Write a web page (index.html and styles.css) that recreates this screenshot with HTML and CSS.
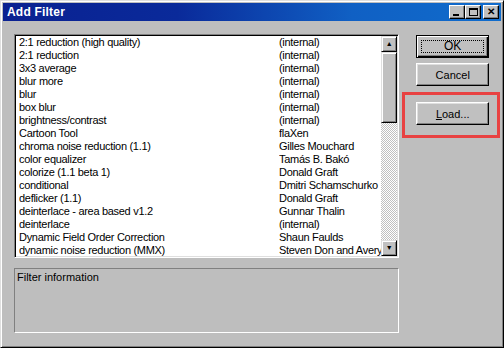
FILE: index.html
```html
<!DOCTYPE html>
<html lang="en">
<head>
    <meta charset="UTF-8">
    <title>Add Filter</title>
    <link rel="stylesheet" href="styles.css">
</head>
<body>
    <div class="window">
        <div class="titlebar">
            <span class="title">Add Filter</span>
            <div class="title-buttons">
                <div class="tbtn"><span class="glyph-min"></span></div>
                <div class="tbtn"><span class="glyph-max"></span></div>
                <div class="tbtn close">&#x2715;</div>
            </div>
        </div>

        <div class="client">
            <div class="left-col">
                <div class="listbox">
                    <div class="rows">
                        <div class="row"><span>2:1 reduction (high quality)</span><span>(internal)</span></div>
                        <div class="row"><span>2:1 reduction</span><span>(internal)</span></div>
                        <div class="row"><span>3x3 average</span><span>(internal)</span></div>
                        <div class="row"><span>blur more</span><span>(internal)</span></div>
                        <div class="row"><span>blur</span><span>(internal)</span></div>
                        <div class="row"><span>box blur</span><span>(internal)</span></div>
                        <div class="row"><span>brightness/contrast</span><span>(internal)</span></div>
                        <div class="row"><span>Cartoon Tool</span><span>flaXen</span></div>
                        <div class="row"><span>chroma noise reduction (1.1)</span><span>Gilles Mouchard</span></div>
                        <div class="row"><span>color equalizer</span><span>Tamás B. Bakó</span></div>
                        <div class="row"><span>colorize (1.1 beta 1)</span><span>Donald Graft</span></div>
                        <div class="row"><span>conditional</span><span>Dmitri Schamschurko</span></div>
                        <div class="row"><span>deflicker (1.1)</span><span>Donald Graft</span></div>
                        <div class="row"><span>deinterlace - area based v1.2</span><span>Gunnar Thalin</span></div>
                        <div class="row"><span>deinterlace</span><span>(internal)</span></div>
                        <div class="row"><span>Dynamic Field Order Correction</span><span>Shaun Faulds</span></div>
                        <div class="row"><span>dynamic noise reduction (MMX)</span><span>Steven Don and Avery Lee</span></div>
                    </div>
                    <div class="scrollbar">
                        <div class="sbtn">&#x25B2;</div>
                        <div class="thumb"></div>
                        <div class="track"></div>
                        <div class="sbtn">&#x25BC;</div>
                    </div>
                </div>
                <div class="info">Filter information</div>
            </div>

            <div class="right-col">
                <button class="btn default"><span class="focus">OK</span></button>
                <button class="btn">Cancel</button>
                <div class="highlight">
                    <button class="btn"><u>L</u>oad...</button>
                </div>
            </div>
        </div>
    </div>
</body>
</html>
```

FILE: styles.css
```css
body {
    margin: 0;
    font-family: 'Liberation Sans', Arial, sans-serif;
    font-size: 11px;
    color: #000;
    background: #c0c0c0;
}
.window {
    width: 504px;
    height: 348px;
    box-sizing: border-box;
    padding: 3px;
    background: #bebebe;
    border-top: 1px solid #dfdfdf;
    border-left: 1px solid #dfdfdf;
    border-right: 1px solid #000;
    border-bottom: 1px solid #000;
    box-shadow: inset 1px 1px 0 #fff, inset -1px -1px 0 #808080;
}
.titlebar {
    height: 18px;
    margin: -1px -1px 0 -1px;
    display: flex;
    align-items: center;
    justify-content: space-between;
    padding: 0 2px 0 4px;
    background: linear-gradient(to right, #0a2191 0%, #0a2a9a 35%, #1060c4 70%, #106ccc 100%);
}
.title {
    color: #fff;
    font-weight: bold;
    font-size: 12px;
    letter-spacing: 0.2px;
}
.title-buttons {
    display: flex;
}
.tbtn {
    width: 16px;
    height: 14px;
    box-sizing: border-box;
    background: #c0c0c0;
    border-top: 1px solid #fff;
    border-left: 1px solid #fff;
    border-right: 1px solid #000;
    border-bottom: 1px solid #000;
    box-shadow: inset -1px -1px 0 #808080;
    display: flex;
    align-items: center;
    justify-content: center;
}
.tbtn.close {
    margin-left: 2px;
    font-size: 10px;
    font-weight: bold;
    line-height: 1;
}
.glyph-min {
    width: 6px;
    height: 2px;
    background: #000;
    margin-top: 6px;
    margin-right: 2px;
}
.glyph-max {
    width: 9px;
    height: 8px;
    box-sizing: border-box;
    border: 1px solid #000;
    border-top-width: 2px;
}
.client {
    display: flex;
    padding: 13px 0 0 10px;
}
.left-col {
    width: 386px;
    display: flex;
    flex-direction: column;
    gap: 10px;
}
.listbox {
    height: 224px;
    box-sizing: border-box;
    display: flex;
    background: #fff;
    border-top: 1px solid #808080;
    border-left: 1px solid #808080;
    border-right: 1px solid #fff;
    border-bottom: 1px solid #fff;
    box-shadow: inset 1px 1px 0 #000, inset -1px -1px 0 #dfdfdf;
    padding: 1px;
    overflow: hidden;
}
.rows {
    flex: 1;
    min-width: 0;
    overflow: hidden;
}
.row {
    height: 13px;
    line-height: 13px;
    display: grid;
    grid-template-columns: 260px 1fr;
    padding-left: 3px;
    letter-spacing: -0.3px;
    white-space: nowrap;
    overflow: hidden;
}
.row span {
    overflow: hidden;
}
.scrollbar {
    width: 16px;
    flex-shrink: 0;
    display: flex;
    flex-direction: column;
}
.sbtn, .thumb {
    box-sizing: border-box;
    background: #c0c0c0;
    border-top: 1px solid #dfdfdf;
    border-left: 1px solid #dfdfdf;
    border-right: 1px solid #000;
    border-bottom: 1px solid #000;
    box-shadow: inset 1px 1px 0 #fff, inset -1px -1px 0 #808080;
}
.sbtn {
    height: 16px;
    font-size: 7px;
    line-height: 14px;
    text-align: center;
}
.thumb {
    height: 71px;
}
.track {
    flex: 1;
    background: repeating-conic-gradient(#fff 0 25%, #c0c0c0 0 50%) 0 0 / 2px 2px;
}
.info {
    height: 65px;
    box-sizing: border-box;
    padding: 2px;
    border-top: 1px solid #808080;
    border-left: 1px solid #808080;
    border-right: 1px solid #fff;
    border-bottom: 1px solid #fff;
}
.right-col {
    width: 98px;
    margin-left: 3px;
    padding-top: 1px;
    display: flex;
    flex-direction: column;
    gap: 5px;
}
.btn {
    width: 73px;
    height: 23px;
    margin-left: 14px;
    padding: 0;
    box-sizing: border-box;
    font-family: inherit;
    font-size: 11px;
    color: #000;
    background: #c0c0c0;
    border-top: 1px solid #fff;
    border-left: 1px solid #fff;
    border-right: 1px solid #000;
    border-bottom: 1px solid #000;
    box-shadow: inset -1px -1px 0 #808080, inset 1px 1px 0 #dfdfdf;
}
.btn.default {
    border: 1px solid #000;
    box-shadow: inset 1px 1px 0 #fff, inset -1px -1px 0 #000, inset -2px -2px 0 #808080;
    display: flex;
    padding: 4px;
}
.focus {
    flex: 1;
    border: 1px dotted #000;
    line-height: 11px;
    font-size: 12px;
}
.highlight {
    margin-top: 1px;
    border: 3px solid #e84242;
    padding: 7px 0 10px 0;
}
.highlight .btn {
    margin-left: 11px;
}
```
